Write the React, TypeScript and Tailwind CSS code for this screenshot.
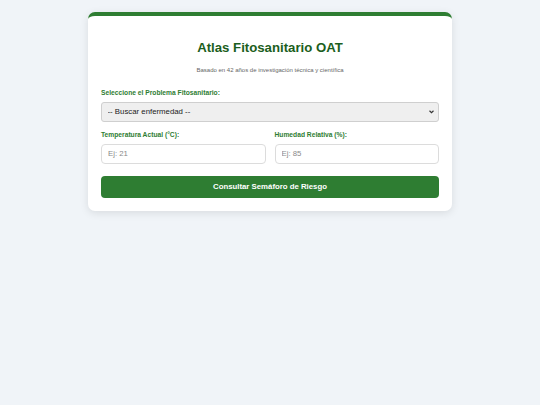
import React from "react";

export default function App() {
  const font = { fontFamily: '"Liberation Sans", Arial, sans-serif' };
  return (
    <div className="min-h-[405px] w-full bg-[#f0f4f8] pt-[12px]" style={font}>
      <div className="mx-auto w-[364px] rounded-[7px] border-t-[4px] border-[#2e7d32] bg-white px-[13px] pb-[13px] pt-[24px] shadow-[0_2px_8px_rgba(0,0,0,0.1)]">
        <h1 className="text-center text-[13.2px] font-bold leading-[15.2px] text-[#1b5e20]">
          Atlas Fitosanitario OAT
        </h1>
        <p className="mt-[11.8px] text-center text-[6px] leading-[6.8px] text-[#666]">
          Basado en 42 años de investigación técnica y científica
        </p>
        <label className="mt-[15.5px] block text-[6.7px] font-bold leading-[7.7px] text-[#2e7d32]">
          Seleccione el Problema Fitosanitario:
        </label>
        <div className="relative mt-[5.3px]">
          <select
            className="block h-[19.5px] w-full appearance-none rounded-[3px] border border-[#cfcfcf] bg-[#efefef] pl-[5.5px] text-[7.8px] text-[#222] outline-none"
            style={font}
            defaultValue=""
          >
            <option value="">-- Buscar enfermedad --</option>
          </select>
          <svg
            className="pointer-events-none absolute right-[5px] top-[7.5px]"
            width="5"
            height="4"
            viewBox="0 0 10 8"
          >
            <path d="M1 1.5 L5 5.5 L9 1.5" fill="none" stroke="#333" strokeWidth="2.2" />
          </svg>
        </div>
        <div className="mt-[9.25px] grid grid-cols-2 gap-x-[9px]">
          <div>
            <label className="block text-[6.7px] font-bold leading-[7.7px] text-[#2e7d32]">
              Temperatura Actual (°C):
            </label>
            <input
              className="mt-[5.3px] block h-[19.5px] w-full rounded-[4px] border border-[#dcdcdc] bg-white px-[6px] text-[7.8px] text-[#222] outline-none placeholder:text-[#8a8a8a]"
              style={font}
              placeholder="Ej: 21"
            />
          </div>
          <div>
            <label className="block text-[6.7px] font-bold leading-[7.7px] text-[#2e7d32]">
              Humedad Relativa (%):
            </label>
            <input
              className="mt-[5.3px] block h-[19.5px] w-full rounded-[4px] border border-[#dcdcdc] bg-white px-[6px] text-[7.8px] text-[#222] outline-none placeholder:text-[#8a8a8a]"
              style={font}
              placeholder="Ej: 85"
            />
          </div>
        </div>
        <button
          className="mt-[12.5px] flex h-[21.5px] w-full items-center justify-center rounded-[4px] bg-[#2e7d32] text-[7.8px] font-bold text-white"
          style={font}
        >
          Consultar Semáforo de Riesgo
        </button>
      </div>
    </div>
  );
}
